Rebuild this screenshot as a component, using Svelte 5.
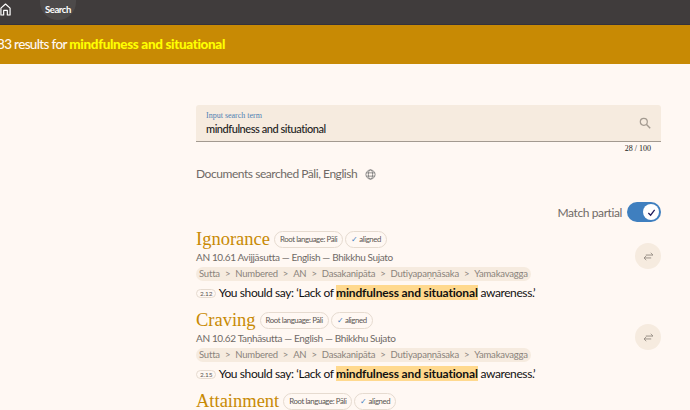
<script>
    const crumbs = ["Sutta", "Numbered", "AN", "Dasakanipāta", "Dutiyapaṇṇāsaka", "Yamakavagga"];
    const results = [
        { title: "Ignorance", ref: "AN 10.61 Avijjāsutta — English — Bhikkhu Sujato", seg: "2.12" },
        { title: "Craving", ref: "AN 10.62 Taṇhāsutta — English — Bhikkhu Sujato", seg: "2.15" }
    ];
</script>

<header class="topbar">
    <svg class="home" viewBox="0 0 12 14" width="11" height="13">
        <path d="M1 13V5.500L6 1l5 4.500V13H8V8H4v5z" fill="none" stroke="#fff" stroke-width="1.300" stroke-linejoin="round" />
    </svg>
    <span class="nav-pill">Search</span>
</header>

<div class="banner">83 results for <b>mindfulness and situational</b></div>

<main>
    <div class="field">
        <div class="field-text">
            <label for="q">Input search term</label>
            <div id="q" class="value">mindfulness and situational</div>
        </div>
        <svg viewBox="0 0 12 12" width="12" height="12">
            <circle cx="4.800" cy="4.800" r="3.500" fill="none" stroke="#a39a90" stroke-width="1.200" />
            <path d="M7.500 7.500L11.200 11.200" stroke="#a39a90" stroke-width="1.400" />
        </svg>
    </div>
    <div class="counter">28 / 100</div>

    <div class="searched">
        Documents searched Pāli, English
        <svg viewBox="0 0 12 12" width="11" height="11">
            <g fill="none" stroke="#777" stroke-width="0.900">
                <circle cx="6" cy="6" r="5" />
                <ellipse cx="6" cy="6" rx="2.300" ry="5" />
                <path d="M1.300 4.200h9.400M1.300 7.800h9.400" />
            </g>
        </svg>
    </div>

    <div class="partial">
        Match partial
        <span class="switch">
            <span class="knob">
                <svg viewBox="0 0 10 10" width="9" height="9">
                    <path d="M1.500 5.500L4 8l4.500-6" fill="none" stroke="#1f1a5c" stroke-width="1.400" />
                </svg>
            </span>
        </span>
    </div>

    {#each results as r}
        <article>
            <div class="body">
                <div class="title-row">
                    <h2>{r.title}</h2>
                    <span class="chip">Root language: Pāli</span>
                    <span class="chip"><i>✓</i> aligned</span>
                </div>
                <div class="ref">{r.ref}</div>
                <div class="crumbs">
                    {#each crumbs as c, i}
                        {#if i > 0}<span class="sep">&gt;</span>{/if}<span>{c}</span>
                    {/each}
                </div>
                <div class="excerpt">
                    <span class="seg">{r.seg}</span>
                    You should say: ‘Lack of <mark>mindfulness and situational</mark> awareness.’
                </div>
            </div>
            <button aria-label="Compare">
                <svg viewBox="0 0 12 10" width="11" height="9">
                    <path d="M3 3.400h8M8.500 1l2.500 2.400M9 6.600H1M3.500 4.400L1 6.600M3.500 9L1 6.600" fill="none" stroke="#9a9188" stroke-width="1.100" />
                </svg>
            </button>
        </article>
    {/each}

    <div class="title-row">
        <h2>Attainment</h2>
        <span class="chip">Root language: Pāli</span>
        <span class="chip"><i>✓</i> aligned</span>
    </div>
</main>

<style>
    :global(body) {
        background-color: #fff8f3;
        overflow: hidden;
    }
    .topbar {
        height: 24px;
        background-color: #403c3c;
        border-bottom: 1px solid #35323a;
        display: flex;
        align-items: flex-start;
        gap: 29px;
    }
    .home {
        margin-top: 3px;
    }
    .nav-pill {
        background-color: #4d4a4a;
        color: #fff;
        font: 700 9.500px/20px Lato, sans-serif;
        letter-spacing: -0.400px;
        width: 36px;
        text-align: center;
        border-radius: 0 0 18px 18px;
        height: 20px;
    }
    .banner {
        height: 39px;
        background-color: #c88a04;
        color: #fff8f3;
        font: 500 13.500px/39px Lato, sans-serif;
        letter-spacing: -0.650px;
        margin-left: -3px;
        white-space: nowrap;
    }
    .banner b {
        color: #ffff00;
        font-weight: 900;
        letter-spacing: -0.350px;
    }
    main {
        width: 465px;
        margin-left: 196px;
        padding-top: 41px;
        font-family: Lato, sans-serif;
    }
    .field {
        height: 36px;
        background-color: #f6ebdf;
        border-bottom: 1px solid #a39a90;
        border-radius: 3px 3px 0 0;
        display: flex;
        justify-content: space-between;
        align-items: center;
        padding: 0 10px;
    }
    .field-text {
        display: flex;
        flex-direction: column;
    }
    label {
        font: 8px/12px "Liberation Serif", serif;
        color: #4f7fb3;
    }
    .value {
        font-size: 11px;
        line-height: 14px;
        color: #222;
        font-weight: 500;
        letter-spacing: -0.450px;
    }
    .counter {
        font: 8px/14px "Liberation Serif", serif;
        color: #222;
        text-align: right;
        padding-right: 10px;
    }
    .searched {
        margin-top: 9px;
        font-size: 12px;
        line-height: 18px;
        letter-spacing: -0.450px;
        color: #6f6a66;
        display: flex;
        align-items: center;
        gap: 8px;
    }
    .partial {
        margin-top: 18px;
        height: 22px;
        display: flex;
        justify-content: flex-end;
        align-items: center;
        gap: 5px;
        font-size: 12px;
        letter-spacing: -0.400px;
        color: #6f6a66;
    }
    .switch {
        width: 34px;
        height: 20px;
        border-radius: 10px;
        background-color: #3f7fbf;
        display: flex;
        align-items: center;
        justify-content: flex-end;
        padding-right: 2px;
        box-sizing: border-box;
    }
    .knob {
        width: 16px;
        height: 16px;
        border-radius: 50%;
        background-color: #fff;
        display: flex;
        align-items: center;
        justify-content: center;
    }
    article {
        display: flex;
        justify-content: space-between;
        align-items: flex-start;
        height: 81px;
    }
    article:first-of-type {
        margin-top: 5px;
    }
    .title-row {
        display: flex;
        align-items: center;
        gap: 2px;
        height: 22px;
    }
    h2 {
        margin: 0 2px 0 0;
        font: 400 18.500px "Liberation Serif", serif;
        color: #c88a04;
    }
    .chip {
        border: 1px solid #e6dbd0;
        border-radius: 9px;
        font-size: 7.800px;
        line-height: 15px;
        letter-spacing: -0.400px;
        padding: 0 5px;
        color: #5a5552;
        white-space: nowrap;
    }
    .chip i {
        font-style: normal;
        color: #3f7fbf;
    }
    .ref {
        font-size: 10px;
        line-height: 15px;
        letter-spacing: -0.350px;
        color: #6f6a66;
    }
    .crumbs {
        margin-top: 2px;
        display: flex;
        gap: 5px;
        width: fit-content;
        background-color: #f6ebdf;
        border-radius: 7px;
        padding: 0 3px;
        font-size: 9.500px;
        line-height: 14px;
        letter-spacing: -0.200px;
        color: #8a837c;
    }
    .excerpt {
        margin-top: 4px;
        font-size: 12px;
        line-height: 16px;
        letter-spacing: -0.400px;
        color: #111;
        white-space: nowrap;
    }
    .seg {
        border: 1px solid #e6dbd0;
        border-radius: 6px;
        font-size: 6.500px;
        letter-spacing: -0.100px;
        padding: 0 3px;
        color: #5a5552;
        vertical-align: 1px;
    }
    mark {
        background-color: #ffd98e;
        color: #111;
        font-weight: 700;
        letter-spacing: -0.150px;
    }
    button {
        width: 26px;
        height: 26px;
        margin-top: 15px;
        padding: 0;
        border: none;
        border-radius: 50%;
        background-color: #f6ebdf;
        display: flex;
        align-items: center;
        justify-content: center;
    }
</style>
